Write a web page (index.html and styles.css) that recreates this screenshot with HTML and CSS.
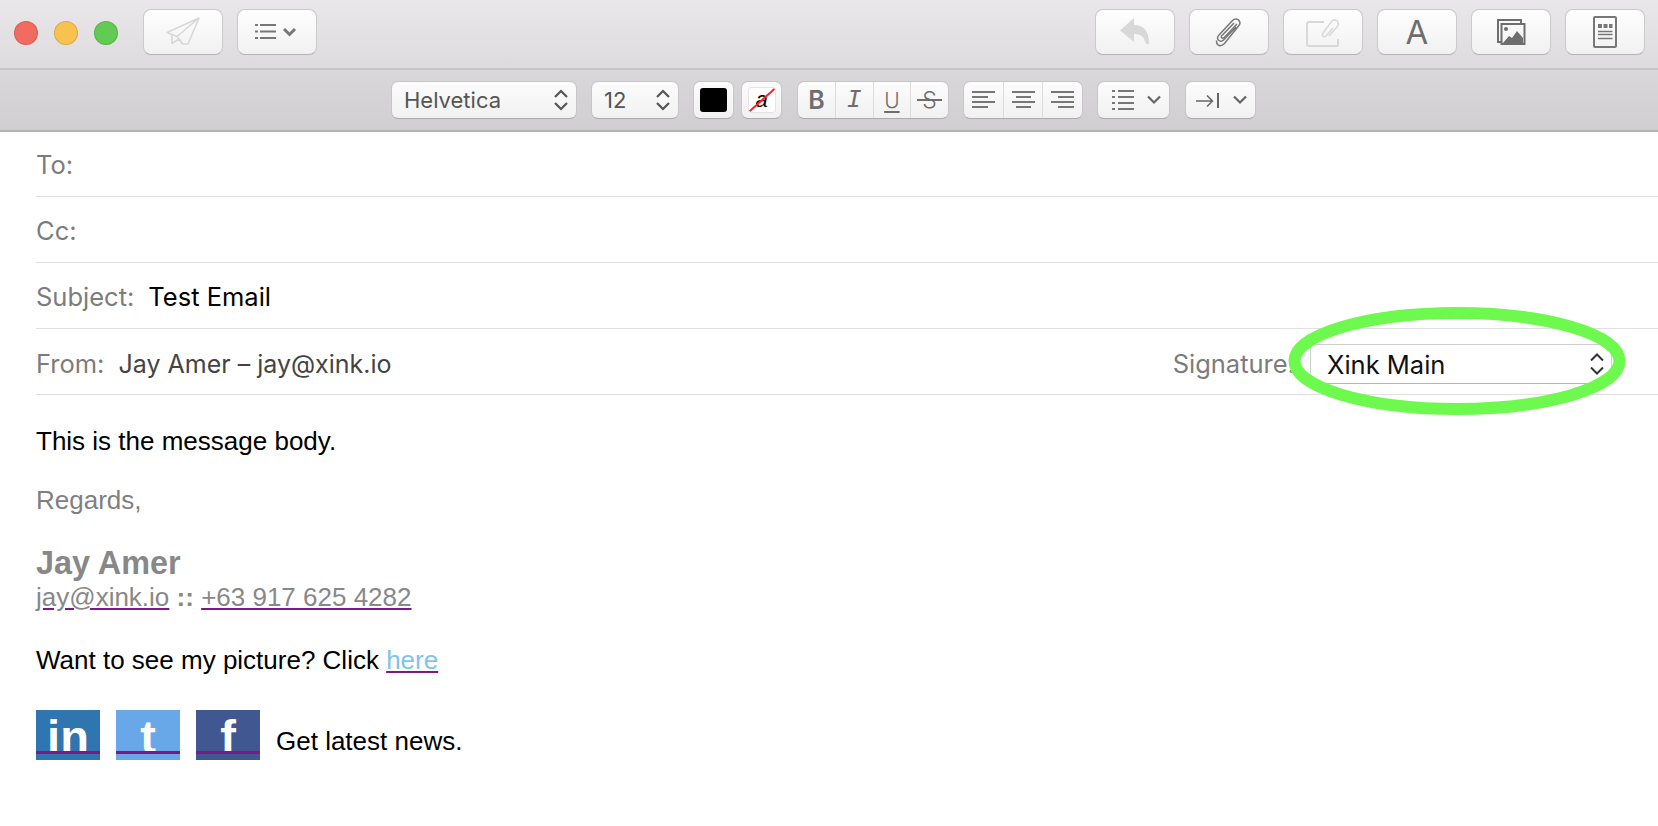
FILE: index.html
```html
<!DOCTYPE html>
<html lang="en">
<head>
<meta charset="utf-8">
<title>New Message</title>
<link rel="stylesheet" href="styles.css">
</head>
<body>
<div class="chrome">
  <header class="titlebar">
    <div class="lights">
      <span class="light red"></span><span class="light yellow"></span><span class="light green"></span>
    </div>
    <button class="tb dim">
      <svg width="36" height="30" viewBox="0 0 36 30" fill="none" stroke="#d8d8d8" stroke-width="1.6" stroke-linejoin="round"><path d="M2 15.500 34 1 23 27H17.500L12 19.500ZM34 1 12 19.500M7 18v8.500l7-4.500M17.500 27 14.500 22"/></svg>
    </button>
    <button class="tb">
      <svg width="44" height="20" viewBox="0 0 44 20" fill="none" stroke="#777"><path d="M5 3h16M5 9.500h16M5 16h16M0 3h3M0 9.500h3M0 16h3" stroke-width="2"/><path d="M29 7l5.500 5.500L40 7" stroke-width="3"/></svg>
    </button>
    <div class="spacer"></div>
    <button class="tb dim">
      <svg width="32" height="30" viewBox="0 0 32 30"><path d="M15 1 1 13.500 15 25v-8c6 0 10 2 12 10h3c0-13-5-19-15-19z" fill="#d8d8d8"/></svg>
    </button>
    <button class="tb">
      <svg width="28" height="32" viewBox="0 0 28 32" fill="none" stroke="#777" stroke-width="1.500"><path d="M21 11 8.500 24c-2.500 2.500-6 .5-6-2 0-1.200.5-2 1.500-3L17.500 4.500c2-2 5-2 6.500 0s1 4-.5 5.500L9.500 27.500c-3.500 3.500-8 3-8-3"/><path d="M19 7 7 19.500c-1 1-1 2 0 2.500s1.500 .2 2.500-.8L22 8"/></svg>
    </button>
    <button class="tb dim">
      <svg width="36" height="32" viewBox="0 0 36 32" fill="none" stroke="#d8d8d8" stroke-width="2"><path d="M19 6H4a2 2 0 0 0-2 2v20a2 2 0 0 0 2 2h28a1.500 1.500 0 0 0 1-2v-5"/><path d="M28 12l-7 8c-2 2-5 0-3-3L27 5c2-2 5-1 6 1s0 4-1.500 5.500L24 20" stroke-width="1.500"/></svg>
    </button>
    <button class="tb tb-a">A</button>
    <button class="tb">
      <svg width="30" height="28" viewBox="0 0 30 28" fill="none" stroke="#6e6e6e" stroke-width="2"><path d="M25 5V2H2v22h4"/><rect x="5.500" y="6" width="23" height="20"/><circle cx="10" cy="11" r="2" fill="#6e6e6e" stroke="none"/><path d="M7 25l6-7 3 2 5-7 6 7v5z" fill="#6e6e6e" stroke="none"/></svg>
    </button>
    <button class="tb">
      <svg width="24" height="32" viewBox="0 0 24 32" fill="none" stroke="#777" stroke-width="2"><rect x="1" y="1" width="22" height="30" rx="1"/><path d="M5 10h4M10.500 10h4M16 10h3.500" stroke-width="4"/><path d="M5 15.500h14.500M5 18.500h14.500M5 22.500h14.500" stroke-width="1.500"/></svg>
    </button>
  </header>

  <div class="formatbar">
    <div class="fb select font">Helvetica
      <svg class="updown" width="16" height="26" viewBox="0 0 16 26" fill="none" stroke="#555" stroke-width="2.200"><path d="M2 10l6-6 6 6M2 16l6 6 6-6"/></svg>
    </div>
    <div class="fb select size">12
      <svg class="updown" width="16" height="26" viewBox="0 0 16 26" fill="none" stroke="#555" stroke-width="2.200"><path d="M2 10l6-6 6 6M2 16l6 6 6-6"/></svg>
    </div>
    <div class="fb swatch"><span class="black"></span></div>
    <div class="fb swatch bgcolor"><span class="white">a</span></div>
    <div class="fb group biu">
      <span class="seg bold">B</span>
      <span class="seg italic">I</span>
      <span class="seg under">U</span>
      <span class="seg strike"><span class="strike-s">S</span></span>
    </div>
    <div class="fb group align">
      <span class="seg"><svg width="23" height="20" viewBox="0 0 23 20" stroke="#777" stroke-width="2"><path d="M0 2h23M0 7h16M0 12h23M0 17h16"/></svg></span>
      <span class="seg"><svg width="23" height="20" viewBox="0 0 23 20" stroke="#777" stroke-width="2"><path d="M0 2h23M4 7h15M0 12h23M4 17h15"/></svg></span>
      <span class="seg"><svg width="23" height="20" viewBox="0 0 23 20" stroke="#777" stroke-width="2"><path d="M0 2h23M7 7h16M0 12h23M7 17h16"/></svg></span>
    </div>
    <div class="fb drop list">
      <svg width="22" height="24" viewBox="0 0 22 24" fill="none" stroke="#777" stroke-width="2"><path d="M6 3h16M6 9h16M6 15h16M6 21h16"/><path d="M0 3h3M0 9h3M0 15h3M0 21h3"/></svg>
      <svg width="14" height="10" viewBox="0 0 14 10" fill="none" stroke="#666" stroke-width="2.200"><path d="M1 1.500l6 6 6-6"/></svg>
    </div>
    <div class="fb drop indent">
      <svg width="23" height="17" viewBox="0 0 23 17" fill="none" stroke="#666" stroke-width="1.500"><path d="M0 9h16M11 3.500 16.500 9 11 14.500"/><path d="M22 1v15" stroke-width="2"/></svg>
      <svg width="14" height="10" viewBox="0 0 14 10" fill="none" stroke="#666" stroke-width="2.200"><path d="M1 1.500l6 6 6-6"/></svg>
    </div>
  </div>
</div>

<main class="compose">
  <div class="field"><span class="label">To:</span></div>
  <div class="field"><span class="label">Cc:</span></div>
  <div class="field"><span class="label">Subject:</span><span class="subject">Test Email</span></div>
  <div class="field from">
    <span class="label">From:</span><span class="sender">Jay Amer – jay@xink.io</span>
    <span class="label siglabel">Signature:</span>
    <div class="sigselect">Xink Main
      <svg width="16" height="26" viewBox="0 0 16 26" fill="none" stroke="#333" stroke-width="2"><path d="M2 9.500l6-6 6 6M2 16.500l6 6 6-6"/></svg>
    </div>
    <svg class="ring" width="350" height="118" viewBox="0 0 350 118" fill="none"><ellipse cx="175" cy="59" rx="162.500" ry="48" stroke="#6ef94e" stroke-width="12"/></svg>
  </div>

  <section class="message">
    <p class="m1">This is the message body.</p>
    <p class="m2 grey">Regards,</p>
    <p class="name">Jay Amer</p>
    <p class="contact"><a href="#">jay@xink.io</a> <b>::</b> <a href="#">+63 917 625 4282</a></p>
    <p class="want">Want to see my picture? Click <a href="#" class="here">here</a></p>
    <div class="social">
      <a href="#" class="soc li">in</a>
      <a href="#" class="soc tw">t</a>
      <a href="#" class="soc fb-i">f</a>
      <span class="news">Get latest news.</span>
    </div>
  </section>
</main>
</body>
</html>
```

FILE: styles.css
```css
* { box-sizing: border-box; }
html, body { margin: 0; height: 100%; }
body { width: 1658px; height: 826px; overflow: hidden; background: #fff; font-family: "Liberation Sans", Arial, sans-serif; }

.titlebar { display: flex; align-items: flex-start; height: 70px; padding: 9px 13px 0 14px; background: linear-gradient(#e9e7ea, #dddbde); border-bottom: 2px solid #c6c4c6; gap: 14px; }
.lights { display: flex; gap: 16px; margin-top: 12px; margin-right: 11px; }
.light { flex: none; width: 24px; height: 24px; border-radius: 50%; border: 1px solid rgba(0,0,0,.12); }
.red { background: #f16b60; }
.yellow { background: #f9c24e; }
.green { background: #61cb53; }
.spacer { flex: 1; }
.tb { flex: none; width: 80px; height: 46px; padding: 0; border: 1px solid #cbc9cb; border-bottom-color: #b5b3b5; border-radius: 8px; background: linear-gradient(#fefefe, #f1f1f1); display: flex; align-items: center; justify-content: center; }
.tb-a { font: 400 33px "Inter", "Liberation Sans", sans-serif; color: #6e6e6e; }

.formatbar { display: flex; align-items: flex-start; gap: 15px; height: 62px; padding: 11px 0 0 391px; background: linear-gradient(#d9d7da, #d0ced1); border-bottom: 2px solid #b4b2b4; }
.fb { flex: none; height: 38px; border: 1px solid #c8c6c8; border-bottom-color: #acaaac; border-radius: 7px; background: linear-gradient(#fcfcfc, #f1f1f1); display: flex; align-items: center; color: #555; }
.select { font: 400 22px "Inter", "Liberation Sans", sans-serif; justify-content: space-between; padding: 0 7px 0 12px; }
.font { width: 186px; margin-right: -1px; }
.size { width: 88px; margin-right: -1px; }
.swatch { width: 41px; justify-content: center; margin-right: -8px; }
.bgcolor { margin-right: 0; }
.black { width: 27px; height: 24px; background: #000; border-radius: 3px; }
.white { position: relative; width: 28px; height: 26px; background: #fff; border: 1px solid #e4e4e4; border-radius: 3px; color: #000; font: italic 400 22px/24px "Liberation Sans", sans-serif; text-align: center; overflow: hidden; }
.white::after { content: ""; position: absolute; left: -4px; top: 11px; width: 34px; height: 1.500px; background: #f22; transform: rotate(-42deg); }
.group { overflow: hidden; }
.seg { flex: 1; height: 100%; display: flex; align-items: center; justify-content: center; border-left: 1px solid #dcdcdc; color: #6e6e6e; }
.seg:first-child { border-left: 0; }
.biu { width: 152px; }
.align { width: 120px; margin-left: -1px; }
.bold { font: 600 25px "Inter", "Liberation Sans", sans-serif; }
.italic { font: italic 400 25px "Liberation Mono", monospace; }
.under { font: 300 21px "Inter", "Liberation Sans", sans-serif; text-decoration: underline; text-decoration-thickness: 2px; text-underline-offset: 3px; }
.strike { font: 300 23px "Inter", "Liberation Sans", sans-serif; }
.strike-s { position: relative; }
.strike-s::after { content: ""; position: absolute; left: -5px; right: -5px; top: 50%; height: 2px; margin-top: -1px; background: #6e6e6e; }
.drop { justify-content: space-between; }
.list { width: 73px; margin-left: -1px; padding: 0 8px 0 14px; }
.indent { width: 71px; padding: 0 8px 0 10px; }

.compose { padding: 0 0 0 36px; }
.field { position: relative; display: flex; align-items: center; height: 66px; padding-top: 1px; border-bottom: 1px solid #e0e0e0; font: 400 25.500px "Inter", "Noto Sans", sans-serif; }
.field:first-child { height: 65px; padding-top: 0; }
.field.from { padding-top: 4px; }
.label { color: #7c7c7c; }
.subject { margin-left: 14px; color: #000; }
.sender { margin-left: 14px; font-size: 25px; color: #444; }
.siglabel { margin-left: auto; }
.sigselect { flex: none; display: flex; align-items: center; justify-content: space-between; width: 302px; height: 40px; margin: 1px 46px 0 15px; padding: 0 6px 0 16px; border: 1px solid #cfcfcf; border-bottom-color: #b5b5b5; border-radius: 2px; color: #111; background: #fff; }
.ring { position: absolute; right: 26px; top: -27px; }

.message { font-size: 26px; color: #000; }
.message p { margin: 0; }
.m1 { padding-top: 31px; line-height: 30px; }
.grey { color: #808080; }
.m2 { padding-top: 29px; line-height: 30px; }
.name { padding-top: 30px; font-size: 32.400px; font-weight: 700; line-height: 36px; color: #888; }
.contact { padding-top: 1px; color: #888; line-height: 30px; }
.contact b { font-weight: 700; }
.contact a { color: #888; text-decoration: underline; text-decoration-color: #7b1a85; }
.want { padding-top: 33px; line-height: 30px; }
.here { color: #7fc4ea; text-decoration: underline; text-decoration-color: #7b1a85; }
.social { display: flex; align-items: center; gap: 16px; margin-top: 35px; }
.soc { flex: none; position: relative; display: flex; align-items: center; justify-content: center; width: 64px; height: 50px; padding-top: 4px; color: #fff; font: 700 47px/46px "Liberation Sans", sans-serif; text-decoration: none; }
.soc::after { content: ""; position: absolute; left: 0; right: 0; bottom: 6px; height: 3px; background: #7b1a85; }
.li { background: #2f75b0; }
.tw { background: #69a8e8; }
.fb-i { background: #405792; }
.news { color: #000; padding-top: 12px; }
```
